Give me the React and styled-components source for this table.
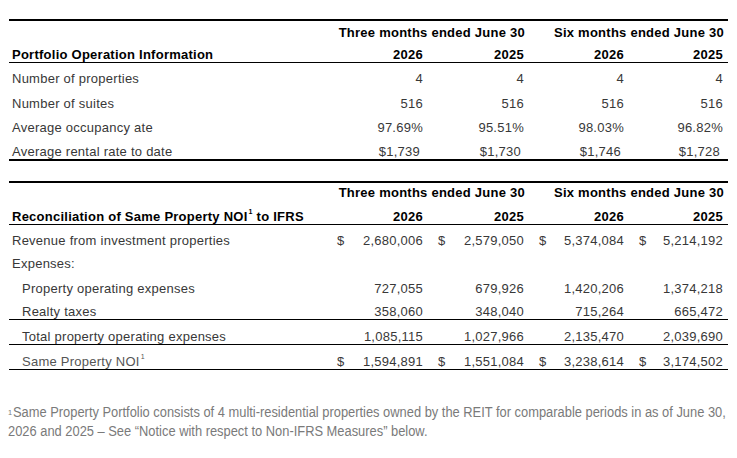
import React from "react";
import styled, { createGlobalStyle } from "styled-components";

const GlobalStyle = createGlobalStyle`
    html, body {
        margin: 0;
        padding: 0;
        background: #ffffff;
    }
    body {
        font-family: "Liberation Sans", Arial, sans-serif;
    }
`;

const Page = styled.div`
    width: 737px;
    height: 458px;
    padding: 19px 9px 0 9px;
    box-sizing: border-box;
    display: flex;
    flex-direction: column;
    background: #fff;
    overflow: hidden;
`;

const Table = styled.table`
    width: 719px;
    border-collapse: collapse;
    table-layout: fixed;
    font-size: 13px;
    letter-spacing: 0.25px;
    color: #383838;
    border-top: 2px solid #000;
    border-bottom: ${(p) => (p.$thickBottom ? "2px solid #000" : "none")};
    margin-bottom: ${(p) => p.$gap || 0}px;
`;

const Row = styled.tr`
    height: ${(p) => p.$h}px;
    border-bottom: ${(p) => (p.$line ? "1px solid #000" : "none")};
`;

const Label = styled.td`
    vertical-align: bottom;
    padding: 0 0 0 ${(p) => (p.$indent ? 13 : 3)}px;
    white-space: nowrap;
    color: ${(p) => (p.$muted ? "#555" : "inherit")};
`;

const HeadLabel = styled.th`
    vertical-align: bottom;
    text-align: left;
    padding: 0 0 0 3px;
    font-weight: bold;
    color: #000;
    white-space: nowrap;
`;

const Span = styled.th`
    vertical-align: bottom;
    text-align: right;
    padding: 0 4px 0 0;
    font-weight: bold;
    color: #000;
    white-space: nowrap;
`;

const Year = styled.th`
    vertical-align: bottom;
    text-align: right;
    padding: 0 5px 0 0;
    font-weight: bold;
    color: #000;
`;

const Num = styled.td`
    vertical-align: bottom;
    text-align: right;
    padding: 0 ${(p) => p.$pr ?? 5}px 0 0;
    white-space: nowrap;
`;

const Money = styled.td`
    vertical-align: bottom;
    padding: 0 5px 0 10px;
    white-space: nowrap;
`;

const MoneyInner = styled.div`
    display: flex;
    justify-content: space-between;
`;

const Sup = styled.sup`
    font-size: 7px;
    vertical-align: top;
    position: relative;
    top: -1px;
    margin-left: 1px;
`;

const Footnote = styled.p`
    margin: 0;
    width: 800px;
    margin-left: -1px;
    transform: scaleX(0.92);
    transform-origin: left top;
    font-family: "Liberation Sans", Arial, sans-serif;
    font-size: 14px;
    line-height: 18px;
    color: #7a7a7a;
`;

const FootMark = styled.span`
    font-size: 8px;
    vertical-align: 2px;
    margin-right: 1px;
`;

const colWidths = [318, 101, 101, 100, 99];

const Cols = () => (
    <colgroup>
        {colWidths.map((w, i) => (
            <col key={i} style={{ width: w }} />
        ))}
    </colgroup>
);

const portfolio = [
    ["Number of properties", ["4", "4", "4", "4"], 24],
    ["Number of suites", ["516", "516", "516", "516"], 25],
    ["Average occupancy ate", ["97.69%", "95.51%", "98.03%", "96.82%"], 24],
];

const Dollar = ({ value, sign }) => (
    <Money>
        <MoneyInner>
            <span>{sign ? "$" : ""}</span>
            <span>{value}</span>
        </MoneyInner>
    </Money>
);

const recon = [
    { label: "Revenue from investment properties", sign: true, vals: ["2,680,006", "2,579,050", "5,374,084", "5,214,192"], h: 24 },
    { label: "Expenses:", vals: ["", "", "", ""], h: 23 },
    { label: "Property operating expenses", indent: true, vals: ["727,055", "679,926", "1,420,206", "1,374,218"], h: 25 },
    { label: "Realty taxes", indent: true, vals: ["358,060", "348,040", "715,264", "665,472"], h: 23, line: true },
    { label: "Total property operating expenses", indent: true, vals: ["1,085,115", "1,027,966", "2,135,470", "2,039,690"], h: 25, line: true },
];

export default function App() {
    return (
        <>
            <GlobalStyle />
            <Page>
                <Table $thickBottom $gap={20}>
                    <Cols />
                    <thead>
                        <Row $h={20}>
                            <th />
                            <Span colSpan={2}>Three months ended June 30</Span>
                            <Span colSpan={2}>Six months ended June 30</Span>
                        </Row>
                        <Row $h={22} $line>
                            <HeadLabel>Portfolio Operation Information</HeadLabel>
                            <Year>2026</Year>
                            <Year>2025</Year>
                            <Year>2026</Year>
                            <Year>2025</Year>
                        </Row>
                    </thead>
                    <tbody>
                        {portfolio.map(([label, vals, h]) => (
                            <Row key={label} $h={h}>
                                <Label>{label}</Label>
                                {vals.map((v, i) => (
                                    <Num key={i}>{v}</Num>
                                ))}
                            </Row>
                        ))}
                        <Row $h={25}>
                            <Label>Average rental rate to date</Label>
                            {["$1,739", "$1,730", "$1,746", "$1,728"].map((v, i) => (
                                <Num key={i} $pr={8}>{v}</Num>
                            ))}
                        </Row>
                    </tbody>
                </Table>

                <Table $gap={33}>
                    <Cols />
                    <thead>
                        <Row $h={18}>
                            <th />
                            <Span colSpan={2}>Three months ended June 30</Span>
                            <Span colSpan={2}>Six months ended June 30</Span>
                        </Row>
                        <Row $h={24} $line>
                            <HeadLabel>
                                Reconciliation of Same Property NOI<Sup>1</Sup> to IFRS
                            </HeadLabel>
                            <Year>2026</Year>
                            <Year>2025</Year>
                            <Year>2026</Year>
                            <Year>2025</Year>
                        </Row>
                    </thead>
                    <tbody>
                        {recon.map((r) => (
                            <Row key={r.label} $h={r.h} $line={r.line}>
                                <Label $indent={r.indent}>{r.label}</Label>
                                {r.sign
                                    ? r.vals.map((v, i) => <Dollar key={i} value={v} sign />)
                                    : r.vals.map((v, i) => <Num key={i}>{v}</Num>)}
                            </Row>
                        ))}
                        <Row $h={25} $line>
                            <Label $indent $muted>
                                Same Property NOI<Sup>1</Sup>
                            </Label>
                            {["1,594,891", "1,551,084", "3,238,614", "3,174,502"].map((v, i) => (
                                <Dollar key={i} value={v} sign />
                            ))}
                        </Row>
                    </tbody>
                </Table>

                <Footnote>
                    <FootMark>1</FootMark>Same Property Portfolio consists of 4 multi-residential properties owned by the REIT for comparable periods in as of June 30, 2026 and 2025 – See “Notice with respect to Non-IFRS Measures” below.
                </Footnote>
            </Page>
        </>
    );
}
